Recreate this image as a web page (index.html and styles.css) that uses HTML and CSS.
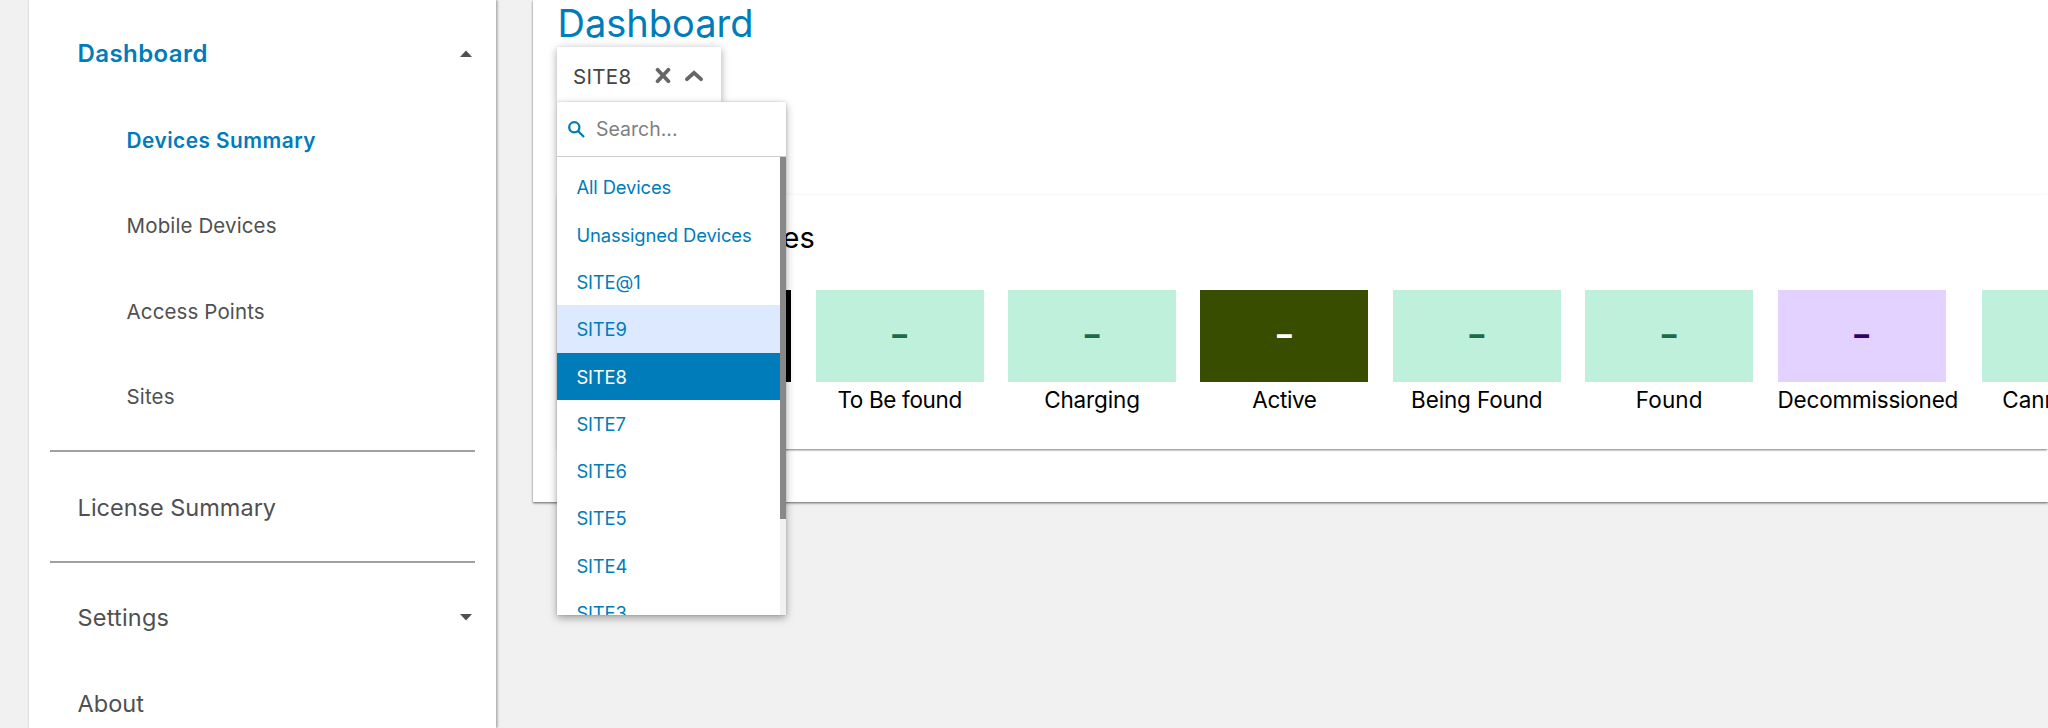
FILE: index.html
```
<!DOCTYPE html>
<html lang="en">
<head>
<meta charset="utf-8">
<title>Dashboard</title>
<link rel="stylesheet" href="styles.css">
</head>
<body>
<div class="app">
  <nav class="sidebar">
    <a class="nav-item current top"><span>Dashboard</span>
      <svg class="caret" viewBox="0 0 12 7"><path d="M0 7 6 0.5 12 7z"/></svg></a>
    <a class="nav-item sub current">Devices Summary</a>
    <a class="nav-item sub">Mobile Devices</a>
    <a class="nav-item sub">Access Points</a>
    <a class="nav-item sub">Sites</a>
    <hr class="divider">
    <a class="nav-item">License Summary</a>
    <hr class="divider">
    <a class="nav-item settings"><span>Settings</span>
      <svg class="caret" viewBox="0 0 12 7"><path d="M0 0 6 6.5 12 0z"/></svg></a>
    <a class="nav-item">About</a>
  </nav>

  <main class="page">
    <h1 class="page-title">Dashboard</h1>
    <div class="select">
      <div class="select-box">
        <span class="select-value">SITE8</span>
        <svg class="icon-clear" viewBox="0 0 16 17"><path d="M2.6 2.8 13.4 14.2M13.4 2.8 2.6 14.2"/></svg>
        <svg class="icon-up" viewBox="0 0 18 12"><path d="M2 9.2 9 2.8 16 9.2"/></svg>
      </div>
      <div class="menu">
        <label class="search">
          <svg class="icon-search" viewBox="0 0 17 17"><circle cx="6.3" cy="6.3" r="5.1"/><path d="M10 10 16 16"/></svg>
          <span>Search...</span>
        </label>
        <div class="menu-body">
          <ul class="options">
            <li>All Devices</li>
            <li>Unassigned Devices</li>
            <li>SITE@1</li>
            <li class="hovered">SITE9</li>
            <li class="selected">SITE8</li>
            <li>SITE7</li>
            <li>SITE6</li>
            <li>SITE5</li>
            <li>SITE4</li>
            <li>SITE3</li>
          </ul>
          <div class="scrollbar"><div class="thumb"></div></div>
        </div>
      </div>
    </div>

    <section class="panel">
      <h2 class="panel-title">Mobile Devices</h2>
      <div class="tiles">
        <div class="tile"><div class="box black">–</div><div class="label">Total</div></div>
        <div class="tile"><div class="box">–</div><div class="label to-be">To Be found</div></div>
        <div class="tile"><div class="box">–</div><div class="label">Charging</div></div>
        <div class="tile"><div class="box olive">–</div><div class="label active">Active</div></div>
        <div class="tile"><div class="box">–</div><div class="label">Being Found</div></div>
        <div class="tile"><div class="box">–</div><div class="label found">Found</div></div>
        <div class="tile"><div class="box purple">–</div><div class="label decom">Decommissioned</div></div>
        <div class="tile"><div class="box">–</div><div class="label cannot">Cannot Find</div></div>
      </div>
    </section>
  </main>
</div>
</body>
</html>
```
FILE: styles.css
```
* { box-sizing: border-box; }
body {
  margin: 0;
  height: 728px;
  overflow: hidden;
  background: #f1f1f1;
  color: #000;
  font-family: Inter, "Liberation Sans", sans-serif;
}
.app { display: flex; align-items: flex-start; gap: 37px; padding-left: 29px; }

.sidebar {
  flex: none;
  width: 467px;
  height: 728px;
  padding-top: 11px;
  overflow: hidden;
  background: #fff;
  box-shadow: 0 0 2px rgba(0,0,0,.22), 2px 0 2px rgba(0,0,0,.2);
}
.nav-item {
  display: flex;
  align-items: center;
  justify-content: space-between;
  height: 85.5px;
  padding: 0 24px 0 48.6px;
  color: #505050;
  font-size: 23.5px;
}
.nav-item.sub { padding-left: 97.6px; font-size: 20.5px; letter-spacing: .12px; }
.nav-item.current { color: #007cba; font-weight: 600; font-size: 24px; letter-spacing: .4px; }
.nav-item.sub.current { font-size: 20.8px; letter-spacing: .48px; height: 86px; }
.nav-item.top { height: 86px; padding-bottom: 1px; }
.nav-item.settings { letter-spacing: .2px; }
.caret { width: 12px; height: 7px; fill: #505050; }
.divider { margin: 10.5px 21px 12.5px 21px; height: 2px; border: 0; background: #a0a0a0; }

.page {
  flex: none;
  width: 1515px;
  height: 502px;
  padding-left: 24px;
  background: #fff;
  box-shadow: 0 1px 2px rgba(0,0,0,.5), 0 2px 3px rgba(0,0,0,.1);
}
.page-title {
  margin: 0;
  padding-left: .5px;
  height: 47px;
  color: #007cba;
  font-size: 38px;
  font-weight: 400;
  line-height: 47px;
}
.select { position: relative; height: 148px; }
.select-box {
  display: flex;
  align-items: center;
  width: 164px;
  height: 55px;
  padding: 2px 0 0 16px;
  background: #fff;
  box-shadow: 0 2px 8px rgba(0,0,0,.35);
}
.select-value { width: 82px; color: #444; font-size: 20.5px; letter-spacing: .3px; line-height: 55px; padding-top: 1px; }
.icon-clear { width: 16px; height: 17px; margin-right: 13.5px; fill: none; stroke: #666; stroke-width: 3.8; stroke-linecap: round; }
.icon-up { width: 18px; height: 12px; fill: none; stroke: #666; stroke-width: 3.7; stroke-linecap: round; }

.menu {
  position: absolute;
  z-index: 2;
  top: 55px;
  left: 0;
  width: 229.4px;
  height: 513px;
  background: #fff;
  box-shadow: 0 3px 8px rgba(0,0,0,.35), 0 0 2px rgba(0,0,0,.15);
}
.search {
  display: flex;
  align-items: center;
  gap: 11px;
  height: 55px;
  padding: 0 10px 0 11px;
  border-bottom: 1px solid #ccc;
  color: #808080;
  font-size: 19.5px;
}
.icon-search { width: 17px; height: 17px; fill: none; stroke: #007cba; stroke-width: 2.3; }
.menu-body { display: flex; height: 458px; overflow: hidden; }
.options { flex: 1; margin: 0; padding: 6.4px 0 0; list-style: none; }
.options li {
  height: 47.3px;
  padding-left: 19.4px;
  color: #007cba;
  font-size: 18.4px;
  letter-spacing: -.13px;
  line-height: 48.4px;
  white-space: nowrap;
}
.options .hovered { background: #dce9ff; }
.options .selected { background: #007cba; color: #fff; }
.scrollbar { width: 6.4px; background: #f1f1f1; }
.thumb { height: 362px; background: #888; }

.panel { height: 254px; box-shadow: 0 2px 2px -1px rgba(0,0,0,.5), 0 0 3px rgba(0,0,0,.08); background: #fff; overflow: hidden; }
.panel-title { margin: 0; padding: 0 0 0 48px; height: 95px; font-size: 29px; font-weight: 400; line-height: 86px; }
.tiles { display: flex; gap: 24.3px; padding-left: 66.2px; }
.tile { flex: none; }
.box {
  width: 168.1px;
  height: 92px;
  background: #bff0dc;
  color: #1b6b4a;
  font-size: 29.5px;
  font-weight: 800;
  line-height: 89px;
  text-align: center;
}
.box.black { background: #000; color: #fff; }
.box.olive { background: #394d00; color: #fff; }
.box.purple { background: #e3d1ff; color: #30006b; }
.label { font-size: 22.5px; letter-spacing: -.14px; line-height: 35.5px; text-align: center; white-space: nowrap; }
.label.to-be { letter-spacing: -.35px; }
.label.active { letter-spacing: -.4px; }
.label.found { letter-spacing: .1px; }
.label.decom { letter-spacing: -.2px; }
.label.cannot { letter-spacing: 0; }
```
